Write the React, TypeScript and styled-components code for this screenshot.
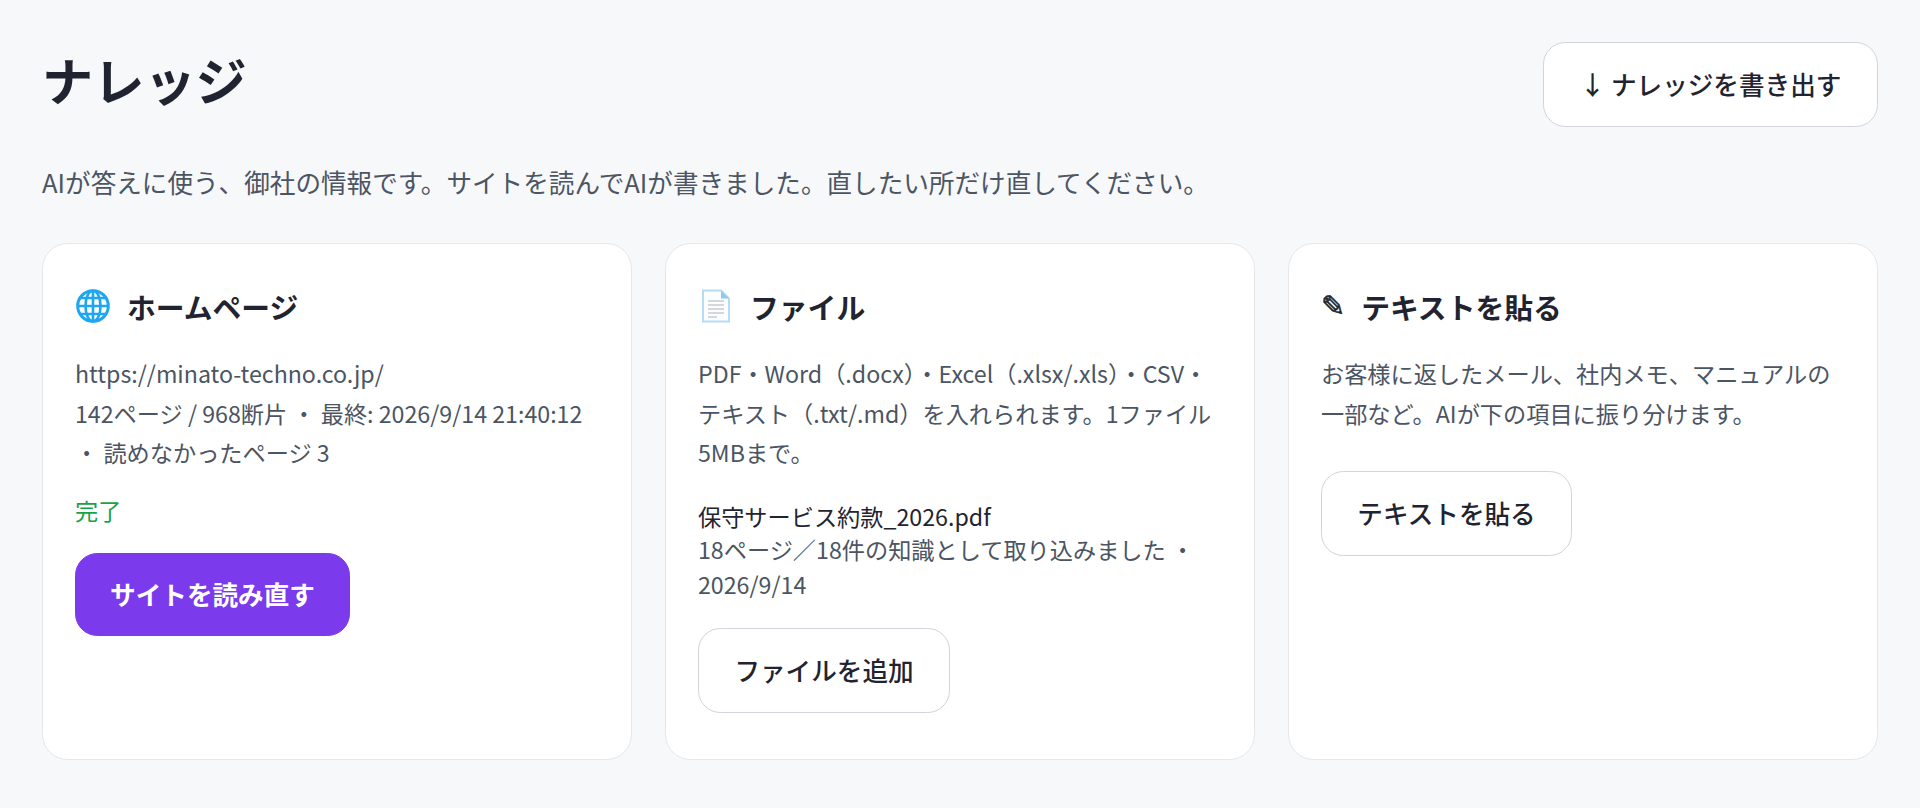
import React from "react";
import styled, { createGlobalStyle } from "styled-components";

const Global = createGlobalStyle`
  html, body { margin: 0; padding: 0; background: #f7f8fa; }
  body { font-family: "Noto Sans CJK JP", "Noto Sans", sans-serif; color: #1f2430; }
  * { box-sizing: border-box; }
`;

const Page = styled.main`
  padding: 42px 42px 0;
  min-height: 808px;
  background: #f7f8fa;
`;
const Header = styled.header`
  display: flex;
  justify-content: space-between;
  align-items: flex-start;
`;
const Title = styled.h1`
  margin: -1px 0 0;
  font-size: 51.2px;
  font-weight: 700;
  line-height: 76px;
  color: #1f2430;
`;
const Button = styled.button<{ $w: number; $h: number }>`
  width: ${(p) => p.$w}px;
  height: ${(p) => p.$h}px;
  border: 1.6px solid #d1d5db;
  border-radius: 22.4px;
  background: #fff;
  color: #1f2430;
  font-family: inherit;
  font-size: 25.6px;
  font-weight: 500;
  padding: 0 0 2px;
  display: flex;
  align-items: center;
  justify-content: center;
`;
const Primary = styled(Button)`
  background: #7c3aed;
  border-color: #7c3aed;
  color: #fff;
  font-weight: 700;
`;
const Lead = styled.p`
  margin: 35px 0 0;
  font-size: 25.6px;
  line-height: 40px;
  color: #4b5563;
`;
const Grid = styled.section`
  margin-top: 41px;
  display: grid;
  grid-template-columns: repeat(3, 1fr);
  gap: 33px;
`;
const Card = styled.article`
  height: 517px;
  padding: 32px;
  background: #fff;
  border: 1.6px solid #e5e7eb;
  border-radius: 25.6px;
`;
const CardHead = styled.h2`
  margin: 0 0 18px;
  display: flex;
  align-items: center;
  gap: 16px;
  height: 60px;
  font-size: 28.8px;
  font-weight: 700;
  color: #1f2430;
`;
const IconBox = styled.span`
  display: flex;
  justify-content: center;
  font-family: "DejaVu Sans", sans-serif;
  font-size: 28.8px;
  -webkit-text-stroke: 0.6px #1f2430;
`;
const Body = styled.p`
  margin: 0;
  font-size: 23.2px;
  line-height: 39.5px;
  color: #4b5563;
`;
const Done = styled.div`
  margin-top: 18px;
  font-size: 23.2px;
  line-height: 39px;
  color: #16a34a;
`;
const FileName = styled.div`
  margin-top: 27px;
  font-size: 23.2px;
  line-height: 32px;
  color: #1f2430;
`;
const FileMeta = styled.div`
  font-size: 23.2px;
  line-height: 35px;
  color: #4b5563;
`;
const ActionRow = styled.div<{ $m: number }>`
  margin-top: ${(p) => p.$m}px;
`;

const Globe = () => (
  <svg width="36" height="34" viewBox="0 0 36 34" fill="none" stroke="#1ea7f0" strokeWidth="2.6">
    <circle cx="18" cy="17" r="15.3" strokeWidth="3" />
    <ellipse cx="18" cy="17" rx="7.5" ry="15.3" />
    <path d="M18 1.5v31M2.5 17h31M5 9h26M5 25h26" />
  </svg>
);
const Doc = () => (
  <svg width="36" height="34" viewBox="-2 0 36 34">
    <path d="M3 1.5h18l8 8v23H3z" fill="#fbfdff" stroke="#b5dcf3" strokeWidth="2" />
    <path d="M21 1.5v8h8z" fill="#8ecbee" />
    <path d="M8 12h16M8 16h16M8 20h16M8 24h16M8 28h9" stroke="#c9ccd0" strokeWidth="1.6" />
  </svg>
);

export default function App() {
  return (
    <>
      <Global />
      <Page>
        <Header>
          <Title>ナレッジ</Title>
          <Button $w={335} $h={85}>↓ ナレッジを書き出す</Button>
        </Header>
        <Lead>AIが答えに使う、御社の情報です。サイトを読んでAIが書きました。直したい所だけ直してください。</Lead>
        <Grid>
          <Card>
            <CardHead><IconBox><Globe /></IconBox>ホームページ</CardHead>
            <Body>
              https://minato-techno.co.jp/
              <br />
              142ページ / 968断片 ・ 最終: 2026/9/14 21:40:12 ・ 読めなかったページ 3
            </Body>
            <Done>完了</Done>
            <ActionRow $m={23}><Primary $w={275} $h={83}>サイトを読み直す</Primary></ActionRow>
          </Card>
          <Card>
            <CardHead><IconBox><Doc /></IconBox>ファイル</CardHead>
            <Body>PDF・Word（.docx）・Excel（.xlsx/.xls）・CSV・テキスト（.txt/.md）を入れられます。1ファイル5MBまで。</Body>
            <FileName>保守サービス約款_2026.pdf</FileName>
            <FileMeta>18ページ／18件の知識として取り込みました ・ 2026/9/14</FileMeta>
            <ActionRow $m={26}><Button $w={252} $h={85}>ファイルを追加</Button></ActionRow>
          </Card>
          <Card>
            <CardHead><IconBox>✎</IconBox>テキストを貼る</CardHead>
            <Body>お客様に返したメール、社内メモ、マニュアルの一部など。AIが下の項目に振り分けます。</Body>
            <ActionRow $m={38}><Button $w={251} $h={85}>テキストを貼る</Button></ActionRow>
          </Card>
        </Grid>
      </Page>
    </>
  );
}
